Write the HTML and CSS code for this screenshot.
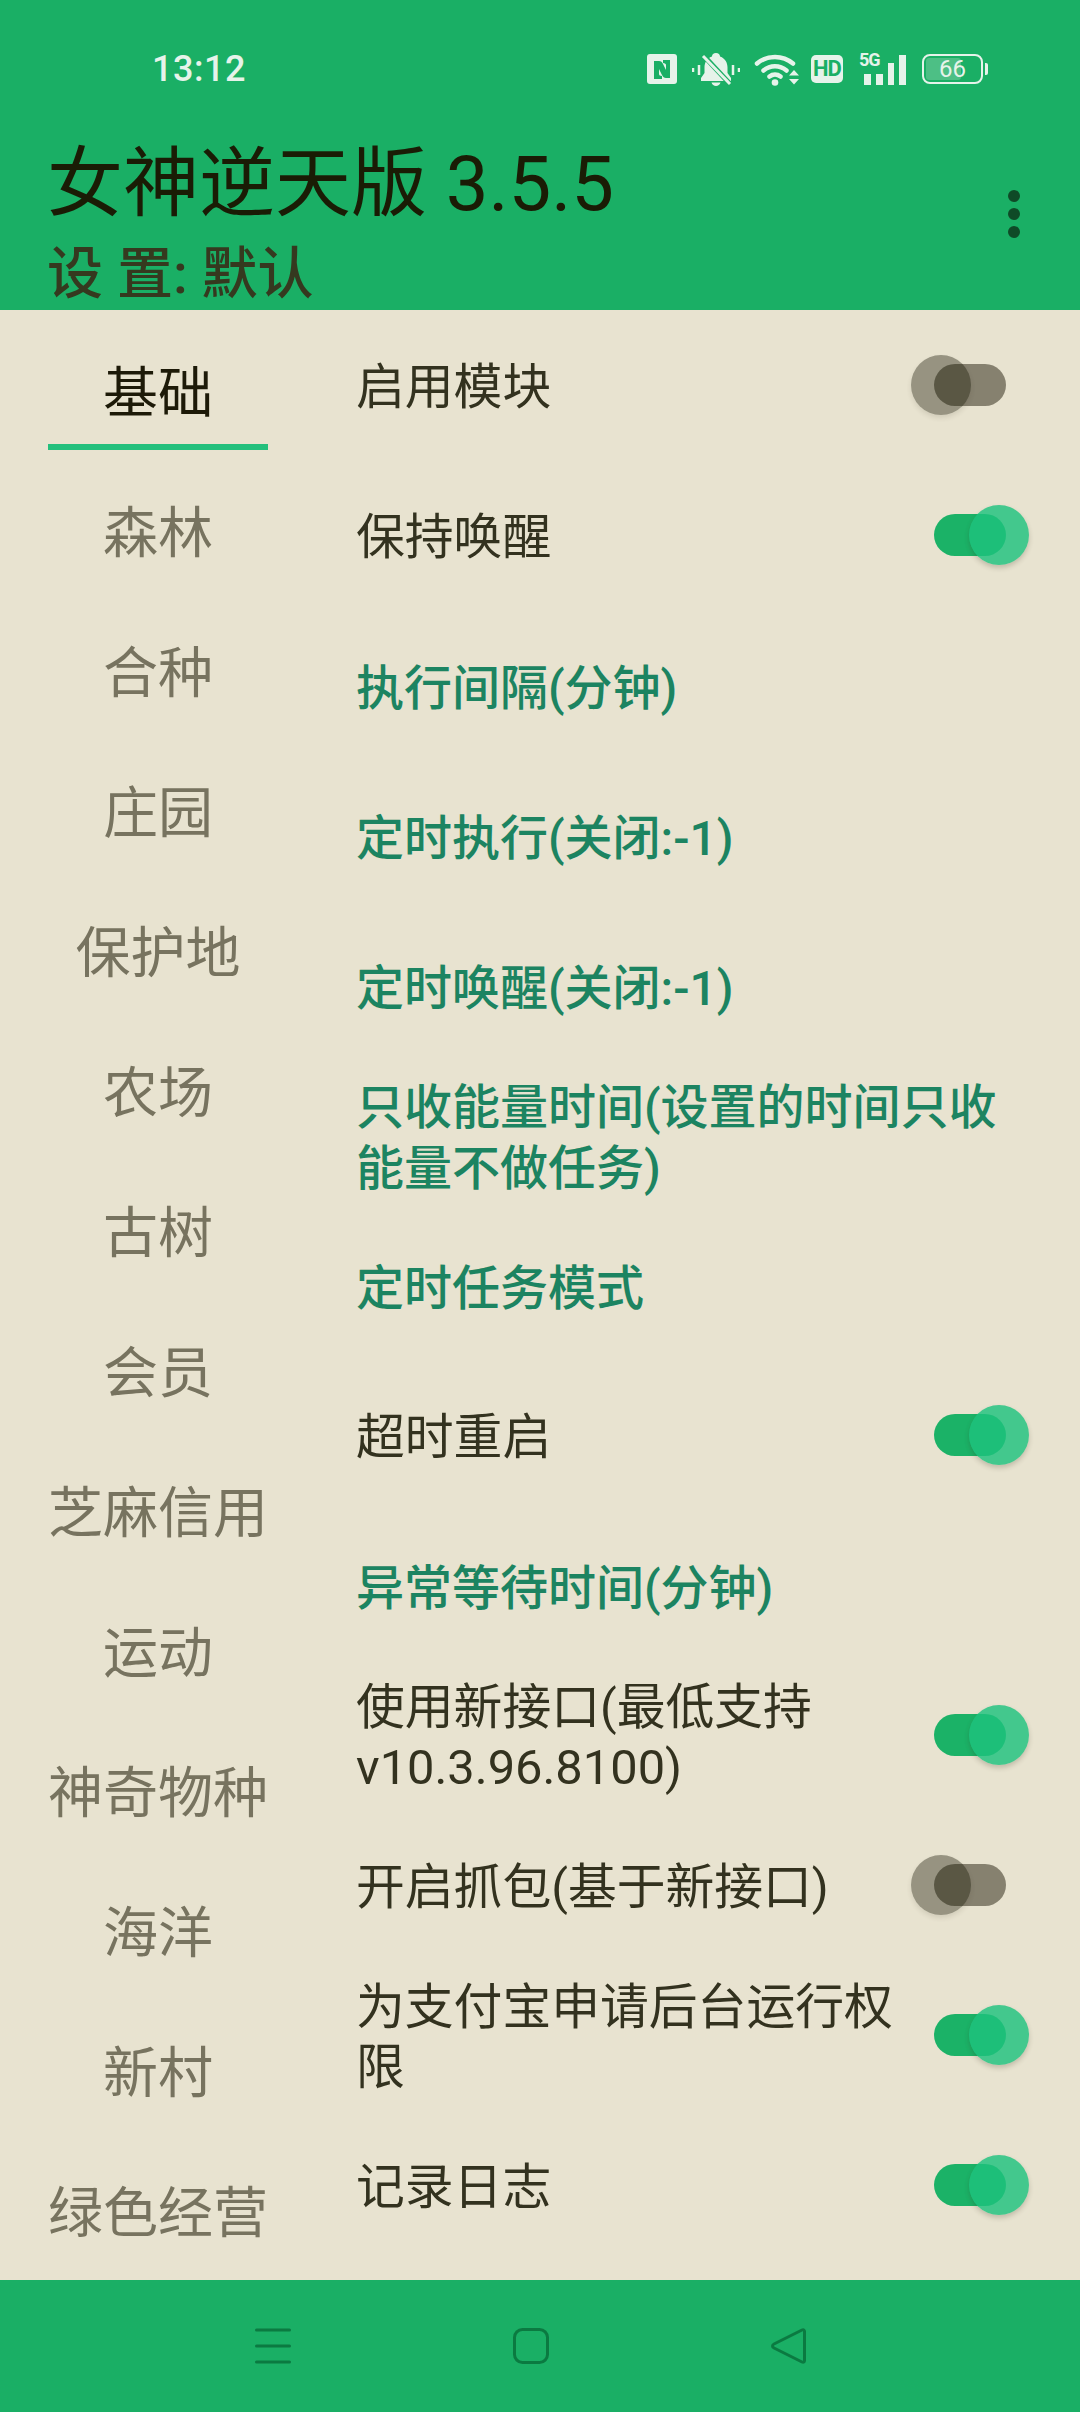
FILE: index.html
```html
<!DOCTYPE html>
<html lang="zh-CN">
<head>
    <meta charset="UTF-8">
    <meta name="viewport" content="width=device-width, initial-scale=1.0">
    <title>女神逆天版 3.5.5</title>
    <link rel="stylesheet" href="styles.css">
</head>
<body>
    <header class="app-header">
        <div class="status-bar">
            <span class="clock">13:12</span>
            <div class="status-icons">
                <svg class="icon-nfc" viewBox="0 0 30 30"><rect width="30" height="30" rx="3" fill="#e6f3ea"/><path d="M7 7h5c2 0 3 1 4 3l3 6v-5c0-1-1-2-3-2V6h7v18h-4c-2 0-3-1-4-3l-3-6v5c0 1 1 2 3 2v3H7z" fill="#1aaf65"/></svg>
                <svg class="icon-bell" viewBox="0 0 48 33"><path d="M24 0c-2.500 0-4 1.500-4 3.500C14.500 5.500 12.500 10 12.500 14.500V20L9 25v3h30v-3l-3.500-5v-5.500C35.500 10 33.500 5.500 28 3.500 28 1.500 26.500 0 24 0zM19.500 29.500c.5 2 2.500 3.500 4.500 3.500s4-1.500 4.500-3.500z" fill="#e6f3ea"/><path d="M11 2l27 29" stroke="#1aaf65" stroke-width="5"/><path d="M11 3l27 28" stroke="#e6f3ea" stroke-width="3"/><path d="M1 15v4M7 12v10M41 12v10M47 15v4" stroke="#e6f3ea" stroke-width="2.500"/></svg>
                <svg class="icon-wifi" viewBox="0 0 45 33"><path d="M3 10.500a28 28 0 0 1 36 0M9.500 17.500a18 18 0 0 1 23 0M15.500 23.500a9 9 0 0 1 11 0" fill="none" stroke="#e6f3ea" stroke-width="4.500" stroke-linecap="round"/><circle cx="21" cy="29.500" r="3.300" fill="#e6f3ea"/><path d="M35 22.500l5-5.500 5 5.500zM35 26l5 5.500 5-5.500z" fill="#e6f3ea"/></svg>
                <span class="hd-badge">HD</span>
                <div class="signal">
                    <span class="signal-type">5G</span>
                    <span class="bar bar-low"></span>
                    <span class="bar bar-low"></span>
                    <span class="bar bar-mid"></span>
                    <span class="bar bar-high"></span>
                </div>
                <div class="battery">
                    <div class="battery-body">
                        <div class="battery-fill"></div>
                        <span class="battery-level">66</span>
                    </div>
                    <div class="battery-tip"></div>
                </div>
            </div>
        </div>
        <div class="title-row">
            <div class="title-text">
                <h1 class="app-title">女神逆天版 3.5.5</h1>
                <p class="app-subtitle">设 置: 默认</p>
            </div>
            <div class="more-menu">
                <span class="more-dot"></span>
                <span class="more-dot"></span>
                <span class="more-dot"></span>
            </div>
        </div>
    </header>

    <main class="content">
        <nav class="tabs">
            <div class="tab tab-active">基础</div>
            <div class="tab">森林</div>
            <div class="tab">合种</div>
            <div class="tab">庄园</div>
            <div class="tab">保护地</div>
            <div class="tab">农场</div>
            <div class="tab">古树</div>
            <div class="tab">会员</div>
            <div class="tab">芝麻信用</div>
            <div class="tab">运动</div>
            <div class="tab">神奇物种</div>
            <div class="tab">海洋</div>
            <div class="tab">新村</div>
            <div class="tab">绿色经营</div>
        </nav>
        <section class="settings">
            <div class="row"><span class="row-text">启用模块</span><span class="switch"><span class="track"></span><span class="thumb"></span></span></div>
            <div class="row"><span class="row-text">保持唤醒</span><span class="switch on"><span class="track"></span><span class="thumb"></span></span></div>
            <div class="row link">执行间隔(分钟)</div>
            <div class="row link">定时执行(关闭:-1)</div>
            <div class="row link">定时唤醒(关闭:-1)</div>
            <div class="row link">只收能量时间(设置的时间只收能量不做任务)</div>
            <div class="row link">定时任务模式</div>
            <div class="row"><span class="row-text">超时重启</span><span class="switch on"><span class="track"></span><span class="thumb"></span></span></div>
            <div class="row link">异常等待时间(分钟)</div>
            <div class="row"><span class="row-text">使用新接口(最低支持v10.3.96.8100)</span><span class="switch on"><span class="track"></span><span class="thumb"></span></span></div>
            <div class="row"><span class="row-text">开启抓包(基于新接口)</span><span class="switch"><span class="track"></span><span class="thumb"></span></span></div>
            <div class="row"><span class="row-text">为支付宝申请后台运行权限</span><span class="switch on"><span class="track"></span><span class="thumb"></span></span></div>
            <div class="row"><span class="row-text">记录日志</span><span class="switch on"><span class="track"></span><span class="thumb"></span></span></div>
        </section>
    </main>

    <footer class="nav-bar">
        <svg class="nav-icon" viewBox="0 0 36 36"><path d="M1.500 2h33M1.500 18h33M1.500 34h33" stroke="#0b7a41" stroke-width="3" stroke-linecap="round"/></svg>
        <svg class="nav-icon" viewBox="0 0 36 36"><rect x="1.500" y="1.500" width="33" height="33" rx="8" fill="none" stroke="#0b7a41" stroke-width="3"/></svg>
        <svg class="nav-icon" viewBox="0 0 36 36"><path d="M31 2L3 16c-2 1-2 3 0 4l28 14c1.500.7 2.500 0 2.500-1.500v-29C33.500 2 32.500 1.300 31 2z" fill="none" stroke="#0b7a41" stroke-width="3" stroke-linejoin="round"/></svg>
    </footer>
</body>
</html>
```

FILE: styles.css
```css
* { margin: 0; padding: 0; box-sizing: border-box; }
html, body { height: 100%; }
body {
    width: 1080px;
    height: 2412px;
    display: flex;
    flex-direction: column;
    overflow: hidden;
    background: #e8e3d0;
    font-family: Roboto, 'Noto Sans CJK SC', sans-serif;
    color: #33321f;
}

/* header */
.app-header { height: 310px; background: #1aaf65; flex: none; }
.status-bar { height: 136px; display: flex; align-items: center; justify-content: space-between; padding: 2px 92px 0 152px; }
.clock { font-size: 36px; font-weight: 500; color: #e6f3ea; letter-spacing: 0.5px; }
.status-icons { display: flex; align-items: center; }
.icon-nfc { width: 30px; height: 30px; margin-right: 15px; }
.icon-bell { width: 48px; height: 33px; margin-right: 14px; }
.icon-wifi { width: 45px; height: 33px; margin-right: 12px; }
.hd-badge {
    width: 32px; height: 28px; margin-right: 16px; border-radius: 5px; background: #e6f3ea; color: #1aaf65;
    font-size: 22px; font-weight: 700; line-height: 28px; text-align: center; letter-spacing: -1px;
}
.signal { position: relative; width: 47px; height: 32px; margin-right: 16px; display: flex; align-items: flex-end; gap: 5px; padding-left: 5px; }
.signal-type { position: absolute; left: 0; top: -2px; font-size: 18px; font-weight: 700; color: #e6f3ea; line-height: 18px; letter-spacing: -1px; }
.bar { width: 7px; background: #e6f3ea; }
.bar-low { height: 11px; }
.bar-mid { height: 22px; }
.bar-high { height: 30px; }
.battery { display: flex; align-items: center; gap: 2px; }
.battery-body { position: relative; width: 61px; height: 30px; border: 2.500px solid #e6f3ea; border-radius: 8px; padding: 2px; }
.battery-fill { width: 66%; height: 100%; background: #4dbf85; border-radius: 3px; }
.battery-level { position: absolute; left: 0; right: 0; top: -2.500px; text-align: center; font-size: 24px; line-height: 30px; color: #e6f3ea; }
.battery-tip { width: 3px; height: 12px; background: #e6f3ea; border-radius: 0 2px 2px 0; }

.title-row { height: 174px; display: flex; justify-content: space-between; padding: 0 60px 0 47px; }
.app-title { font-size: 76px; font-weight: 400; line-height: 94px; color: #1a1c05; white-space: nowrap; margin-top: 1px; }
.app-subtitle { font-size: 56px; font-weight: 500; line-height: 60px; color: #35391f; margin-top: 13px; white-space: nowrap; }
.more-menu { display: flex; flex-direction: column; gap: 6px; margin-top: 54px; }
.more-dot { width: 12px; height: 12px; border-radius: 50%; background: #0f4a27; }

/* content */
.content { flex: 1; display: flex; min-height: 0; overflow: hidden; }
.tabs { width: 220px; margin-left: 48px; flex: none; }
.tab {
    height: 140px; display: flex; align-items: center; justify-content: center;
    font-size: 55px; color: #77735f; white-space: nowrap; padding-top: 16px;
}
.tab-active { color: #1d1a08; border-bottom: 6px solid #24c07c; padding-top: 22px; }
.settings { flex: 1; padding-left: 88px; padding-right: 51px; min-width: 0; }
.row { height: 150px; display: flex; align-items: center; font-size: 48.800px; line-height: 60px; padding-top: 6px; }
.row-text { flex: 1; min-width: 0; }
.link { color: #1c8461; font-size: 48px; font-weight: 500; line-height: 61px; padding-top: 6px; }

/* switch */
.switch { position: relative; flex: none; width: 118px; height: 60px; margin-top: -6px; margin-left: 8px; display: flex; align-items: center; }
.track { display: block; width: 72px; height: 42px; margin-left: 23px; border-radius: 21px; background: #86816f; }
.thumb {
    position: absolute; left: 0; top: 0; width: 60px; height: 60px; border-radius: 50%;
    background: rgba(19, 19, 0, 0.38); box-shadow: 0 3px 5px rgba(60, 50, 30, 0.12);
}
.switch.on .track { background: #1bb267; }
.switch.on .thumb { left: 58px; background: rgba(31, 194, 126, 0.82); box-shadow: 0 3px 5px rgba(60, 50, 30, 0.22); }

/* bottom nav */
.nav-bar { height: 132px; background: #1aaf65; flex: none; display: flex; gap: 222px; padding-left: 255px; align-items: center; }
.nav-icon { width: 36px; height: 36px; }
```
